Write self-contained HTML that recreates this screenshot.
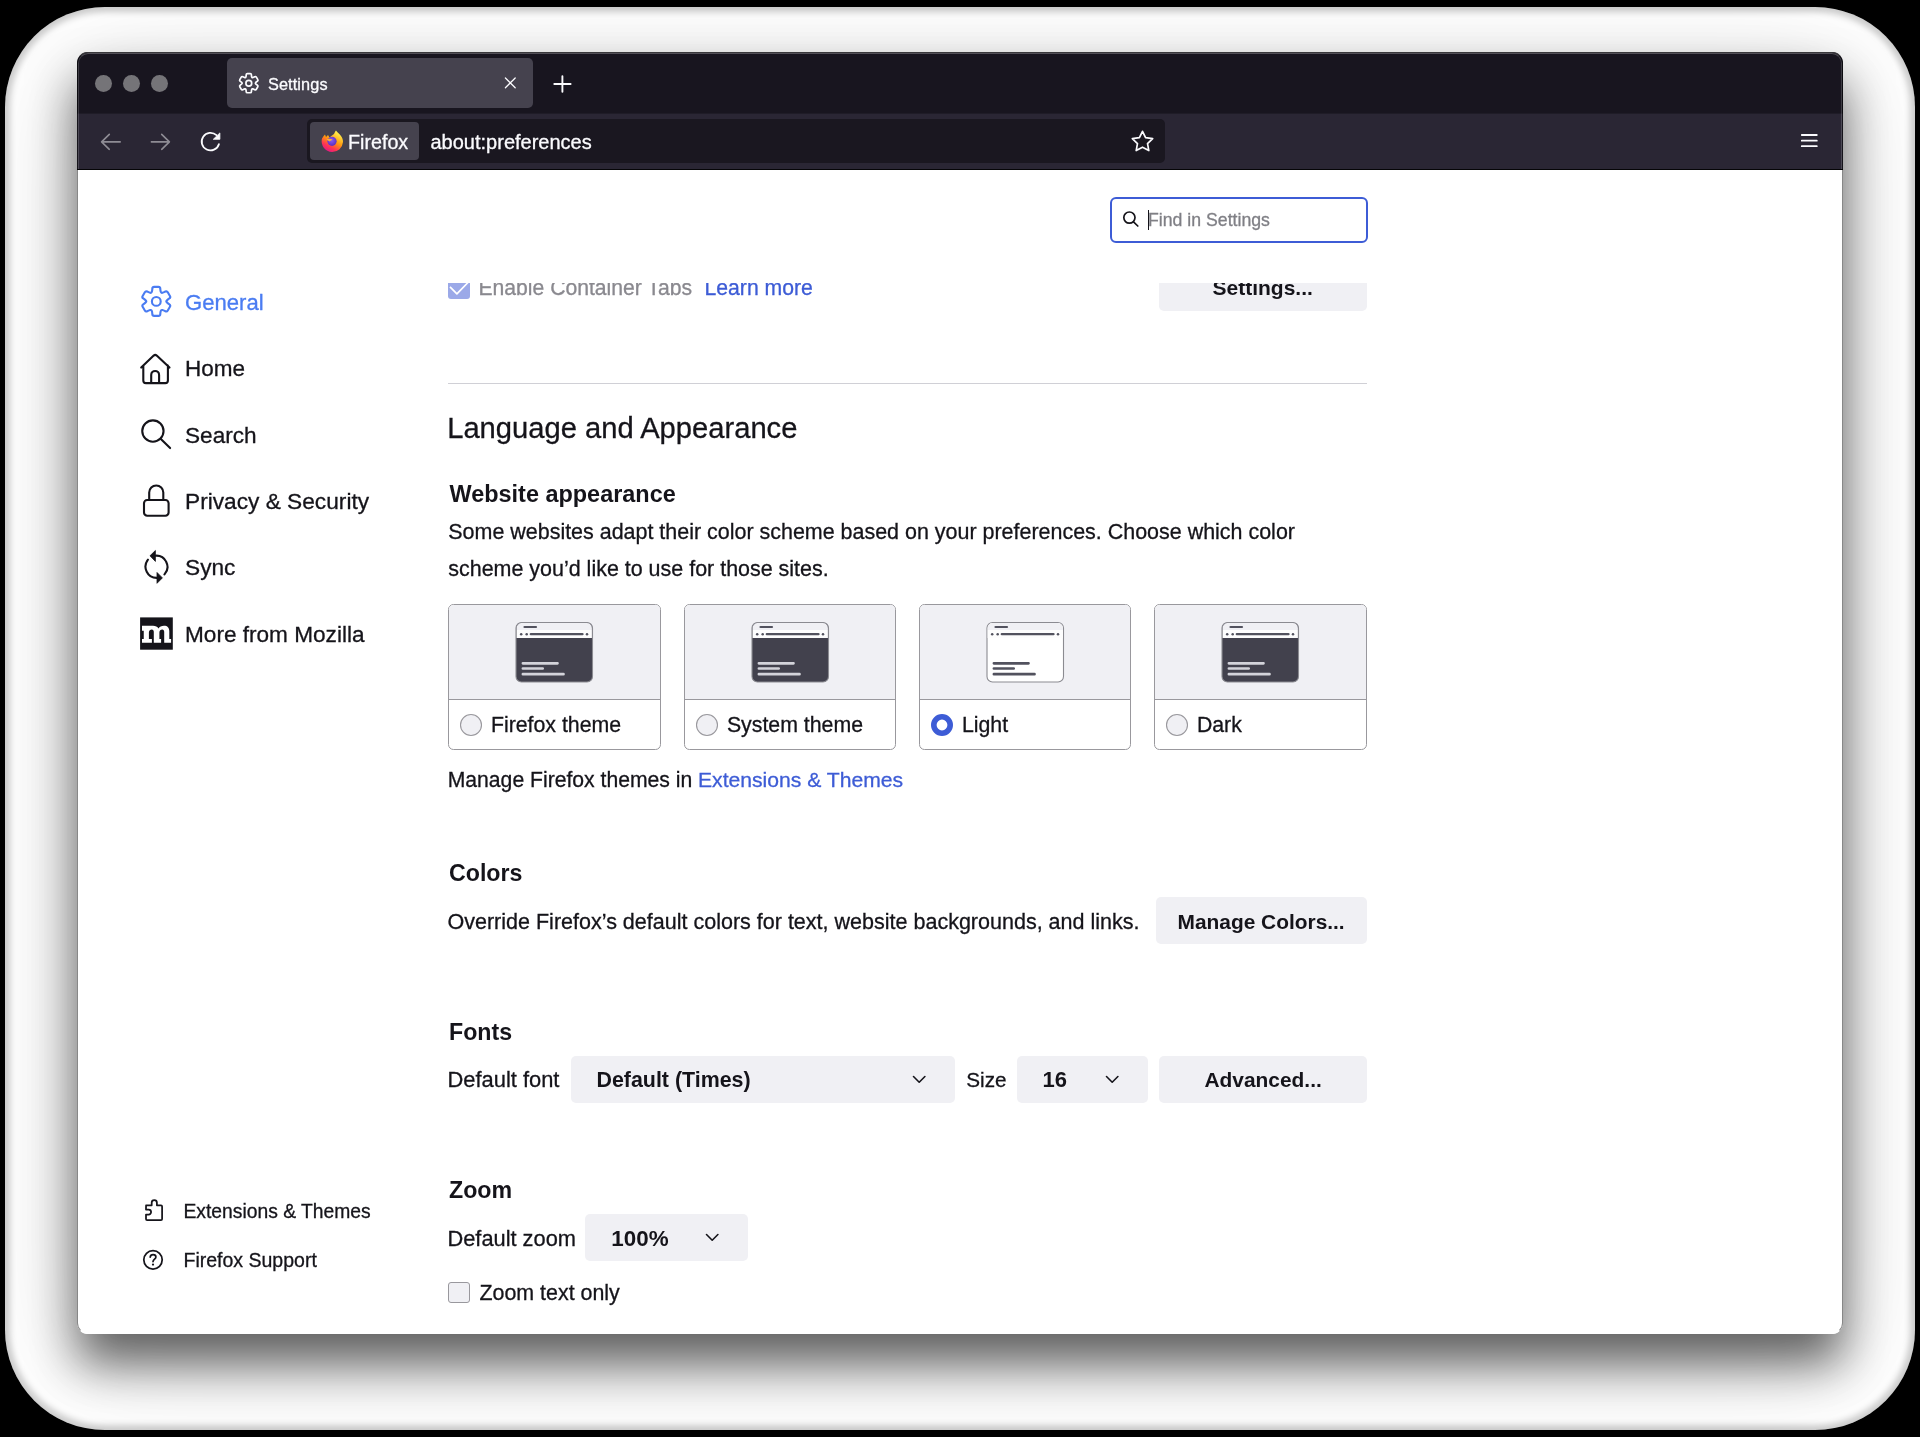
<!DOCTYPE html>
<html><head><meta charset="utf-8"><title>Settings</title>
<style>
html,body{margin:0;padding:0;width:1920px;height:1437px;overflow:hidden;background:#000;font-family:"Liberation Sans", sans-serif}
.t{position:absolute;white-space:nowrap;line-height:1}
#bg{position:absolute;left:5px;top:7px;width:1910px;height:1423px;border-radius:100px;background:#fff;overflow:hidden}
#ov{position:absolute;left:5px;top:7px;width:1910px;height:1423px;border-radius:100px;box-shadow:inset 0 0 6px 5px rgba(0,0,0,0.2)}
#sh{position:absolute;left:77px;top:52px;width:1766px;height:1282px;border-radius:11px;box-shadow:0 30px 48px rgba(0,0,0,0.576),0 22px 105px rgba(0,0,0,0.165)}
#win{position:absolute;left:77px;top:52px;width:1766px;height:1282px;border-radius:11px;overflow:hidden;background:#fff;will-change:transform}
#inner{position:absolute;left:-77px;top:-52px;width:1920px;height:1437px}
#hl{position:absolute;left:78px;top:53px;width:1764px;height:140px;border-radius:10px 10px 0 0;box-sizing:border-box;border:1px solid rgba(255,255,255,0.17);border-top-color:rgba(255,255,255,0.25);border-bottom:none;clip-path:inset(0 0 24px 0)}
#frame{position:absolute;left:77px;top:52px;width:1766px;height:1282px;border-radius:11px;box-sizing:border-box;border:1px solid rgba(0,0,0,0.47);border-top-color:#39383b;border-bottom-color:transparent}
</style></head><body>
<div id="bg"><div style="position:absolute;left:-5px;top:-7px;width:1920px;height:1437px"><div id="sh"></div></div></div>
<div id="win"><div id="inner">
<div style="position:absolute;left:77px;top:52px;width:1766px;height:61px;background:#18151f"></div>
<div style="position:absolute;left:77px;top:113px;width:1766px;height:1px;background:#1f1c27"></div>
<div style="position:absolute;left:77px;top:114px;width:1766px;height:55px;background:#2a2634"></div>
<div style="position:absolute;left:77px;top:169px;width:1766px;height:1px;background:#050507"></div>
<div style="position:absolute;left:95.2px;top:74.5px;width:17px;height:17px;border-radius:50%;background:#757478"></div>
<div style="position:absolute;left:123.0px;top:74.5px;width:17px;height:17px;border-radius:50%;background:#757478"></div>
<div style="position:absolute;left:150.7px;top:74.5px;width:17px;height:17px;border-radius:50%;background:#757478"></div>
<div style="position:absolute;left:227px;top:58px;width:306px;height:50px;border-radius:5px;background:#45424e"></div>
<svg style="position:absolute;left:238px;top:72px" width="22" height="22" viewBox="0 0 22 22"><path d="M8.15 3.40 L8.18 2.74 Q8.24 1.64 9.34 1.64 L12.26 1.64 Q13.36 1.64 13.42 2.74 L13.45 3.40 Q13.49 4.20 13.72 4.96 Q13.95 5.74 14.74 5.56 Q15.52 5.37 16.23 5.01 L16.82 4.70 Q17.80 4.20 18.35 5.15 L19.81 7.69 Q20.36 8.64 19.44 9.23 L18.88 9.59 Q18.21 10.03 17.66 10.61 Q17.10 11.20 17.66 11.79 Q18.21 12.37 18.88 12.81 L19.44 13.17 Q20.36 13.76 19.81 14.71 L18.35 17.25 Q17.80 18.20 16.82 17.70 L16.23 17.39 Q15.52 17.03 14.74 16.84 Q13.95 16.66 13.72 17.44 Q13.49 18.20 13.45 19.00 L13.42 19.66 Q13.36 20.76 12.26 20.76 L9.34 20.76 Q8.24 20.76 8.18 19.66 L8.15 19.00 Q8.11 18.20 7.88 17.44 Q7.65 16.66 6.86 16.84 Q6.08 17.03 5.37 17.39 L4.78 17.70 Q3.80 18.20 3.25 17.25 L1.79 14.71 Q1.24 13.76 2.16 13.17 L2.72 12.81 Q3.39 12.37 3.94 11.79 Q4.50 11.20 3.94 10.61 Q3.39 10.03 2.72 9.59 L2.16 9.23 Q1.24 8.64 1.79 7.69 L3.25 5.15 Q3.80 4.20 4.78 4.70 L5.37 5.01 Q6.08 5.37 6.86 5.56 Q7.65 5.74 7.88 4.96 Q8.11 4.20 8.15 3.40 Z" fill="none" stroke="#fbfbfe" stroke-width="1.7" stroke-linejoin="round"/><circle cx="10.8" cy="11.2" r="2.9" fill="none" stroke="#fbfbfe" stroke-width="1.7"/></svg>
<div class="t" style="left:268.00px;top:76px;font-size:16.3px;color:#fbfbfe;-webkit-text-stroke:0.3px currentColor;letter-spacing:0.1px;">Settings</div>
<svg style="position:absolute;left:504px;top:77px" width="13" height="13" viewBox="0 0 13 13"><path d="M1.4 1.0 L11.2 10.8 M11.2 1.0 L1.4 10.8" stroke="#fbfbfe" stroke-width="1.3" stroke-linecap="round"/></svg>
<svg style="position:absolute;left:553px;top:75px" width="19" height="19" viewBox="0 0 19 19"><path d="M9.4 1.3 V16.7 M1.3 9 H17.6" stroke="#fbfbfe" stroke-width="1.9" stroke-linecap="round"/></svg>
<svg style="position:absolute;left:95px;top:125px" width="130" height="35" viewBox="0 0 130 35"><path d="M14.3 9.4 L6.6 16.9 L14.3 24.3 M6.9 16.9 H25.2" fill="none" stroke="#8e8c94" stroke-width="1.6" stroke-linecap="round" stroke-linejoin="round"/><path d="M66.7 9.4 L74.4 16.9 L66.7 24.3 M74.1 16.9 H56.4" fill="none" stroke="#8e8c94" stroke-width="1.6" stroke-linecap="round" stroke-linejoin="round"/><path d="M123.9 19.2 A8.8 8.8 0 1 1 121.5 10.2" fill="none" stroke="#fbfbfe" stroke-width="1.8" stroke-linecap="round"/><path d="M118.3 14.3 L124.9 7.9 L124.9 14.3 Z" fill="#fbfbfe" stroke="#fbfbfe" stroke-width="0.8" stroke-linejoin="round"/></svg>
<div style="position:absolute;left:307px;top:119px;width:858px;height:44px;border-radius:5px;background:#1a1720"></div>
<div style="position:absolute;left:310px;top:122px;width:109px;height:38px;border-radius:4px;background:#45424e"></div>
<svg style="position:absolute;left:320px;top:129px" width="24" height="24" viewBox="0 0 24 24"><defs><linearGradient id="ffg" x1="0.8" y1="0.1" x2="0.3" y2="1"><stop offset="0" stop-color="#fff44f"/><stop offset="0.45" stop-color="#ff980e"/><stop offset="0.75" stop-color="#ff3750"/><stop offset="1" stop-color="#e31587"/></linearGradient><radialGradient id="ffp" cx="0.45" cy="0.4" r="0.6"><stop offset="0" stop-color="#8a5cf0"/><stop offset="1" stop-color="#5b2fc0"/></radialGradient></defs><path d="M12 23 A10.8 10.8 0 0 1 2 9.5 C3 8 4 6.5 5 5.5 L6 8 L8 6 L9.5 8.5 C11 7 13 6 14 5 C14.5 3.5 15.5 2 16 1.5 C17.5 3.5 19.5 5 21 7 C22.5 9 23 11 23 13 A10.8 10.8 0 0 1 12 23 Z" fill="url(#ffg)"/><circle cx="12" cy="12.3" r="4.6" fill="url(#ffp)"/><path d="M6.5 10.5 C8 9.5 10 9.5 12.5 10.5 L9.5 12.5 Z" fill="#f5b041"/></svg>
<div class="t" style="left:348.00px;top:133px;font-size:19.7px;color:#fbfbfe;-webkit-text-stroke:0.3px currentColor;">Firefox</div>
<div class="t" style="left:430.50px;top:132px;font-size:20px;color:#fbfbfe;-webkit-text-stroke:0.3px currentColor;">about:preferences</div>
<svg style="position:absolute;left:1129px;top:128px" width="27" height="27" viewBox="0 0 27 27"><path d="M13.50 3.27 L16.60 9.69 L23.66 10.65 L18.53 15.58 L19.81 22.53 L13.50 19.21 L7.19 22.53 L8.47 15.58 L3.33 10.65 L10.40 9.69 Z" fill="none" stroke="#fbfbfe" stroke-width="1.7" stroke-linejoin="round"/></svg>
<svg style="position:absolute;left:1799px;top:132px" width="21" height="18" viewBox="0 0 21 18"><path d="M2.8 3 H17.8 M2.8 8.7 H17.8 M2.8 14.2 H17.8" stroke="#fbfbfe" stroke-width="1.8" stroke-linecap="round"/></svg>
<div style="position:absolute;left:1109.5px;top:196.5px;width:258px;height:46.5px;box-sizing:border-box;border:2.6px solid #3d5cd6;border-radius:6px;background:#fff"></div>
<svg style="position:absolute;left:1120px;top:208px" width="22" height="22" viewBox="0 0 22 22"><circle cx="9.4" cy="9.6" r="5.6" fill="none" stroke="#15141a" stroke-width="1.7"/><path d="M13.5 13.8 L17.8 18" stroke="#15141a" stroke-width="1.7" stroke-linecap="round"/></svg>
<div style="position:absolute;left:1147.5px;top:209.5px;width:1.6px;height:20px;background:#15141a"></div>
<div class="t" style="left:1148.00px;top:212px;font-size:17.7px;color:#7f7f85;-webkit-text-stroke:0.3px currentColor;">Find in Settings</div>
<div class="t" style="left:185.00px;top:292px;font-size:22.1px;color:#4a7cf2;-webkit-text-stroke:0.3px currentColor;">General</div>
<div class="t" style="left:185.00px;top:358px;font-size:22.5px;color:#15141a;-webkit-text-stroke:0.3px currentColor;">Home</div>
<div class="t" style="left:185.00px;top:425px;font-size:22.6px;color:#15141a;-webkit-text-stroke:0.3px currentColor;">Search</div>
<div class="t" style="left:185.00px;top:490px;font-size:22.7px;color:#15141a;-webkit-text-stroke:0.3px currentColor;">Privacy &amp; Security</div>
<div class="t" style="left:185.00px;top:556px;font-size:22.7px;color:#15141a;-webkit-text-stroke:0.3px currentColor;">Sync</div>
<div class="t" style="left:185.00px;top:624px;font-size:22.6px;color:#15141a;-webkit-text-stroke:0.3px currentColor;">More from Mozilla</div>
<svg style="position:absolute;left:140px;top:285px" width="33" height="33" viewBox="0 0 33 33"><path d="M12.26 4.47 L12.31 3.61 Q12.42 1.91 14.12 1.91 L18.48 1.91 Q20.18 1.91 20.29 3.61 L20.34 4.47 Q20.42 5.66 20.75 6.82 Q21.10 8.09 22.37 7.76 Q23.54 7.46 24.61 6.93 L25.38 6.55 Q26.91 5.79 27.76 7.27 L29.94 11.05 Q30.79 12.52 29.37 13.46 L28.66 13.94 Q27.66 14.60 26.82 15.46 Q25.90 16.40 26.82 17.34 Q27.66 18.20 28.66 18.86 L29.37 19.34 Q30.79 20.28 29.94 21.75 L27.76 25.53 Q26.91 27.01 25.38 26.25 L24.61 25.87 Q23.54 25.34 22.37 25.04 Q21.10 24.71 20.75 25.98 Q20.42 27.14 20.34 28.33 L20.29 29.19 Q20.18 30.89 18.48 30.89 L14.12 30.89 Q12.42 30.89 12.31 29.19 L12.26 28.33 Q12.18 27.14 11.85 25.98 Q11.50 24.71 10.23 25.04 Q9.06 25.34 7.99 25.87 L7.22 26.25 Q5.69 27.01 4.84 25.53 L2.66 21.75 Q1.81 20.28 3.23 19.34 L3.94 18.86 Q4.94 18.20 5.78 17.34 Q6.70 16.40 5.78 15.46 Q4.94 14.60 3.94 13.94 L3.23 13.46 Q1.81 12.52 2.66 11.05 L4.84 7.27 Q5.69 5.79 7.22 6.55 L7.99 6.93 Q9.06 7.46 10.23 7.76 Q11.50 8.09 11.85 6.82 Q12.18 5.66 12.26 4.47 Z" fill="none" stroke="#4a7cf2" stroke-width="2.1" stroke-linejoin="round"/><circle cx="16.3" cy="16.4" r="4.4" fill="none" stroke="#4a7cf2" stroke-width="2.1"/></svg>
<svg style="position:absolute;left:136px;top:348px" width="40" height="42" viewBox="0 0 40 42"><path d="M5.2 19.6 L17.7 7.6 Q19.2 6.3 20.7 7.6 L33.5 19.6 M7.3 17.5 V32.5 Q7.3 35.1 9.9 35.1 H29.3 Q31.9 35.1 31.9 32.5 V17.5 M15.2 35.1 V26.9 A3.9 3.9 0 0 1 23.1 26.9 V35.1" fill="none" stroke="#15141a" stroke-width="2.1" stroke-linejoin="round" stroke-linecap="round"/></svg>
<svg style="position:absolute;left:136px;top:414px" width="40" height="42" viewBox="0 0 40 42"><circle cx="16.9" cy="17.05" r="10.65" fill="none" stroke="#15141a" stroke-width="2.1"/><path d="M24.6 24.8 L34.1 34.1" stroke="#15141a" stroke-width="2.1" stroke-linecap="round"/></svg>
<svg style="position:absolute;left:136px;top:480px" width="40" height="42" viewBox="0 0 40 42"><rect x="8" y="20" width="24.6" height="15.7" rx="3.2" fill="none" stroke="#15141a" stroke-width="2.1"/><path d="M13.2 20 V12.5 A7.05 7.05 0 0 1 27.3 12.5 V20" fill="none" stroke="#15141a" stroke-width="2.1"/></svg>
<svg style="position:absolute;left:136px;top:546px" width="40" height="42" viewBox="0 0 40 42"><path d="M19.3 9.7 A11.2 11.2 0 0 1 28.5 28.4" fill="none" stroke="#15141a" stroke-width="2.1" stroke-linecap="round"/><path d="M12 13.7 A11.2 11.2 0 0 0 21.1 31.9" fill="none" stroke="#15141a" stroke-width="2.1" stroke-linecap="round"/><path d="M14 9.8 L19.4 4.5 L19.4 15.4 Z" fill="#15141a" stroke="#15141a" stroke-width="0.8" stroke-linejoin="round"/><path d="M26.4 31.9 L21 26.5 L21 37.3 Z" fill="#15141a" stroke="#15141a" stroke-width="0.8" stroke-linejoin="round"/></svg>
<svg style="position:absolute;left:136px;top:612px" width="40" height="42" viewBox="0 0 40 42"><rect x="4.1" y="5.4" width="32.7" height="32.3" fill="#15141a"/><path d="M6 13.7 H17 C19.5 13.7 21.5 14.6 22.5 16.6 C23.5 14.6 25.5 13.7 28 13.7 C31.5 13.7 33.3 15.7 33.3 19.2 V26.9 H35.1 V30.8 H28.2 V20 C28.2 18.4 27.5 17.5 26.2 17.5 C24.7 17.5 23.4 18.7 23.4 20.4 V26.9 H25.1 V30.8 H17.8 V20 C17.8 18.4 17.1 17.5 15.8 17.5 C14.3 17.5 12.9 18.7 12.9 20.4 V26.9 H15.9 V30.8 H6 V26.9 H7.75 V18.7 H6 Z" fill="#fff"/></svg>
<div class="t" style="left:183.50px;top:1202px;font-size:19.3px;color:#15141a;-webkit-text-stroke:0.3px currentColor;">Extensions &amp; Themes</div>
<div class="t" style="left:183.50px;top:1251px;font-size:19.5px;color:#15141a;-webkit-text-stroke:0.3px currentColor;">Firefox Support</div>
<svg style="position:absolute;left:138px;top:1194px" width="32" height="32" viewBox="0 0 32 32"><path d="M8 11.3 H13.7 V8.7 A2.6 2.6 0 0 1 18.9 8.7 V11.3 H23 Q24.1 11.3 24.1 12.4 V24.9 Q24.1 26 23 26 H9.1 Q8 26 8 24.9 V20.6 H10.6 A2.5 2.5 0 0 0 10.6 15.6 H8 V12.4 Q8 11.3 9.1 11.3 Z" fill="none" stroke="#15141a" stroke-width="1.75" stroke-linejoin="round"/></svg>
<svg style="position:absolute;left:138px;top:1244px" width="32" height="32" viewBox="0 0 32 32"><circle cx="15" cy="15.85" r="9.2" fill="none" stroke="#15141a" stroke-width="1.75"/><path d="M12.2 13.1 C12.4 11.3 13.6 10.6 15.1 10.6 C16.7 10.6 17.9 11.6 17.9 13 C17.9 15 15.2 15.3 15 17.6" fill="none" stroke="#15141a" stroke-width="1.7" stroke-linecap="round"/><circle cx="15" cy="20.6" r="1.1" fill="#15141a"/></svg>
<div style="position:absolute;left:0;top:283px;width:1920px;height:1051px;overflow:hidden"><div style="position:absolute;left:0;top:-283px;width:1920px;height:1400px">
<div style="position:absolute;left:448px;top:277px;width:22px;height:22px;border-radius:3px;background:#9ba9e8"></div>
<svg style="position:absolute;left:448px;top:277px" width="22" height="22" viewBox="0 0 22 22"><path d="M2 9.9 L8.9 16.9 L20 5.5" fill="none" stroke="#fff" stroke-width="1.7" stroke-linejoin="round"/></svg>
<div class="t" style="left:478.50px;top:277px;font-size:21.15px;color:#8a898f;-webkit-text-stroke:0.3px currentColor;">Enable Container Tabs</div>
<div class="t" style="left:704.50px;top:277px;font-size:21.2px;color:#3d5cd6;-webkit-text-stroke:0.3px currentColor;">Learn more</div>
<div style="position:absolute;left:1159px;top:263px;width:208px;height:48px;border-radius:5px;background:#f0f0f4"></div>
<div class="t" style="left:1212.50px;top:277px;font-size:21.0px;color:#15141a;font-weight:700;">Settings...</div>
</div></div>
<div style="position:absolute;left:448px;top:383px;width:919px;height:1px;background:#d0d0d6"></div>
<div class="t" style="left:447.20px;top:414px;font-size:29.16px;color:#15141a;-webkit-text-stroke:0.3px currentColor;">Language and Appearance</div>
<div class="t" style="left:449.50px;top:483px;font-size:23.45px;color:#15141a;font-weight:700;">Website appearance</div>
<div class="t" style="left:448.30px;top:522px;font-size:21.46px;color:#15141a;-webkit-text-stroke:0.3px currentColor;">Some websites adapt their color scheme based on your preferences. Choose which color</div>
<div class="t" style="left:448.30px;top:559px;font-size:21.46px;color:#15141a;-webkit-text-stroke:0.3px currentColor;">scheme you’d like to use for those sites.</div>
<div style="position:absolute;left:448px;top:604px;width:213px;height:146px;box-sizing:border-box;border:1px solid #99989d;border-radius:5.5px;background:#fff;overflow:hidden"></div>
<div style="position:absolute;left:449px;top:605px;width:211px;height:95px;background:#f0f0f4;border-radius:4.5px 4.5px 0 0"></div>
<div style="position:absolute;left:449px;top:699px;width:211px;height:1px;background:#99989d"></div>
<svg style="position:absolute;left:513px;top:619px" width="82" height="66" viewBox="0 0 82 66"><rect x="3" y="3.5" width="76.5" height="59.5" rx="5.5" fill="#42414d" stroke="#8b8b91" stroke-width="1.1"/><path d="M3.6 11 V9 A5 5 0 0 1 8.6 4.1 H73.9 A5 5 0 0 1 78.9 9 V11 Z" fill="#f0f0f4"/><rect x="3.6" y="11" width="75.3" height="8" fill="#fdfdfd"/><path d="M11.5 8 H23" stroke="#52525e" stroke-width="2.2" stroke-linecap="round"/><path d="M17.8 15.2 H69.5" stroke="#52525e" stroke-width="2.3" stroke-linecap="round"/><circle cx="8.2" cy="15.2" r="1.25" fill="#52525e"/><circle cx="13.7" cy="15.2" r="1.25" fill="#52525e"/><circle cx="74" cy="15.2" r="1.25" fill="#52525e"/><path d="M9.9 44.3 H44.5 M9.9 49.5 H29.7 M9.9 55.2 H50.5" stroke="#d3d3da" stroke-width="2.7" stroke-linecap="round"/></svg>
<svg style="position:absolute;left:459.2px;top:713px" width="24" height="24" viewBox="0 0 24 24"><circle cx="12" cy="12" r="10.5" fill="#f0f0f4" stroke="#99989d" stroke-width="1.1"/></svg>
<div class="t" style="left:490.90px;top:715px;font-size:21.3px;color:#15141a;-webkit-text-stroke:0.3px currentColor;">Firefox theme</div>
<div style="position:absolute;left:684px;top:604px;width:212px;height:146px;box-sizing:border-box;border:1px solid #99989d;border-radius:5.5px;background:#fff;overflow:hidden"></div>
<div style="position:absolute;left:685px;top:605px;width:210px;height:95px;background:#f0f0f4;border-radius:4.5px 4.5px 0 0"></div>
<div style="position:absolute;left:685px;top:699px;width:210px;height:1px;background:#99989d"></div>
<svg style="position:absolute;left:749px;top:619px" width="82" height="66" viewBox="0 0 82 66"><rect x="3" y="3.5" width="76.5" height="59.5" rx="5.5" fill="#42414d" stroke="#8b8b91" stroke-width="1.1"/><path d="M3.6 11 V9 A5 5 0 0 1 8.6 4.1 H73.9 A5 5 0 0 1 78.9 9 V11 Z" fill="#f0f0f4"/><rect x="3.6" y="11" width="75.3" height="8" fill="#fdfdfd"/><path d="M11.5 8 H23" stroke="#52525e" stroke-width="2.2" stroke-linecap="round"/><path d="M17.8 15.2 H69.5" stroke="#52525e" stroke-width="2.3" stroke-linecap="round"/><circle cx="8.2" cy="15.2" r="1.25" fill="#52525e"/><circle cx="13.7" cy="15.2" r="1.25" fill="#52525e"/><circle cx="74" cy="15.2" r="1.25" fill="#52525e"/><path d="M9.9 44.3 H44.5 M9.9 49.5 H29.7 M9.9 55.2 H50.5" stroke="#d3d3da" stroke-width="2.7" stroke-linecap="round"/></svg>
<svg style="position:absolute;left:695.2px;top:713px" width="24" height="24" viewBox="0 0 24 24"><circle cx="12" cy="12" r="10.5" fill="#f0f0f4" stroke="#99989d" stroke-width="1.1"/></svg>
<div class="t" style="left:726.90px;top:715px;font-size:21.3px;color:#15141a;-webkit-text-stroke:0.3px currentColor;">System theme</div>
<div style="position:absolute;left:919px;top:604px;width:212px;height:146px;box-sizing:border-box;border:1px solid #99989d;border-radius:5.5px;background:#fff;overflow:hidden"></div>
<div style="position:absolute;left:920px;top:605px;width:210px;height:95px;background:#f0f0f4;border-radius:4.5px 4.5px 0 0"></div>
<div style="position:absolute;left:920px;top:699px;width:210px;height:1px;background:#99989d"></div>
<svg style="position:absolute;left:984px;top:619px" width="82" height="66" viewBox="0 0 82 66"><rect x="3" y="3.5" width="76.5" height="59.5" rx="5.5" fill="#ffffff" stroke="#8b8b91" stroke-width="1.1"/><path d="M3.6 11 V9 A5 5 0 0 1 8.6 4.1 H73.9 A5 5 0 0 1 78.9 9 V11 Z" fill="#f0f0f4"/><rect x="3.6" y="11" width="75.3" height="8" fill="#fdfdfd"/><path d="M11.5 8 H23" stroke="#52525e" stroke-width="2.2" stroke-linecap="round"/><path d="M17.8 15.2 H69.5" stroke="#52525e" stroke-width="2.3" stroke-linecap="round"/><circle cx="8.2" cy="15.2" r="1.25" fill="#52525e"/><circle cx="13.7" cy="15.2" r="1.25" fill="#52525e"/><circle cx="74" cy="15.2" r="1.25" fill="#52525e"/><path d="M9.9 44.3 H44.5 M9.9 49.5 H29.7 M9.9 55.2 H50.5" stroke="#52525e" stroke-width="2.7" stroke-linecap="round"/></svg>
<svg style="position:absolute;left:930.2px;top:713px" width="24" height="24" viewBox="0 0 24 24"><circle cx="12" cy="12" r="8.2" fill="#fff" stroke="#3d5cd6" stroke-width="5.6"/></svg>
<div class="t" style="left:961.90px;top:715px;font-size:21.3px;color:#15141a;-webkit-text-stroke:0.3px currentColor;">Light</div>
<div style="position:absolute;left:1154px;top:604px;width:213px;height:146px;box-sizing:border-box;border:1px solid #99989d;border-radius:5.5px;background:#fff;overflow:hidden"></div>
<div style="position:absolute;left:1155px;top:605px;width:211px;height:95px;background:#f0f0f4;border-radius:4.5px 4.5px 0 0"></div>
<div style="position:absolute;left:1155px;top:699px;width:211px;height:1px;background:#99989d"></div>
<svg style="position:absolute;left:1219px;top:619px" width="82" height="66" viewBox="0 0 82 66"><rect x="3" y="3.5" width="76.5" height="59.5" rx="5.5" fill="#42414d" stroke="#8b8b91" stroke-width="1.1"/><path d="M3.6 11 V9 A5 5 0 0 1 8.6 4.1 H73.9 A5 5 0 0 1 78.9 9 V11 Z" fill="#f0f0f4"/><rect x="3.6" y="11" width="75.3" height="8" fill="#fdfdfd"/><path d="M11.5 8 H23" stroke="#52525e" stroke-width="2.2" stroke-linecap="round"/><path d="M17.8 15.2 H69.5" stroke="#52525e" stroke-width="2.3" stroke-linecap="round"/><circle cx="8.2" cy="15.2" r="1.25" fill="#52525e"/><circle cx="13.7" cy="15.2" r="1.25" fill="#52525e"/><circle cx="74" cy="15.2" r="1.25" fill="#52525e"/><path d="M9.9 44.3 H44.5 M9.9 49.5 H29.7 M9.9 55.2 H50.5" stroke="#d3d3da" stroke-width="2.7" stroke-linecap="round"/></svg>
<svg style="position:absolute;left:1165.2px;top:713px" width="24" height="24" viewBox="0 0 24 24"><circle cx="12" cy="12" r="10.5" fill="#f0f0f4" stroke="#99989d" stroke-width="1.1"/></svg>
<div class="t" style="left:1196.90px;top:715px;font-size:21.3px;color:#15141a;-webkit-text-stroke:0.3px currentColor;">Dark</div>
<div class="t" style="left:447.70px;top:769px;font-size:21.16px;color:#15141a;-webkit-text-stroke:0.3px currentColor;">Manage Firefox themes in</div>
<div class="t" style="left:698.00px;top:769px;font-size:21.14px;color:#3d5cd6;-webkit-text-stroke:0.3px currentColor;">Extensions &amp; Themes</div>
<div class="t" style="left:449.00px;top:862px;font-size:23.2px;color:#15141a;font-weight:700;">Colors</div>
<div class="t" style="left:447.50px;top:912px;font-size:21.53px;color:#15141a;-webkit-text-stroke:0.3px currentColor;">Override Firefox’s default colors for text, website backgrounds, and links.</div>
<div style="position:absolute;left:1156px;top:897px;width:211px;height:47px;border-radius:5px;background:#f0f0f4"></div>
<div class="t" style="left:1177.50px;top:912px;font-size:20.9px;color:#15141a;font-weight:700;">Manage Colors...</div>
<div class="t" style="left:449.00px;top:1021px;font-size:23.2px;color:#15141a;font-weight:700;">Fonts</div>
<div class="t" style="left:447.50px;top:1069px;font-size:21.9px;color:#15141a;-webkit-text-stroke:0.3px currentColor;">Default font</div>
<div style="position:absolute;left:571px;top:1056px;width:384px;height:47px;border-radius:5px;background:#f0f0f4"></div>
<div class="t" style="left:596.50px;top:1070px;font-size:21.4px;color:#15141a;font-weight:700;">Default (Times)</div>
<svg style="position:absolute;left:912px;top:1075px" width="15" height="10" viewBox="0 0 15 10"><path d="M1.5 1.5 L7.2 7.2 L12.9 1.5" fill="none" stroke="#15141a" stroke-width="1.6" stroke-linecap="round" stroke-linejoin="round"/></svg>
<div class="t" style="left:966.30px;top:1070px;font-size:20.7px;color:#15141a;-webkit-text-stroke:0.3px currentColor;">Size</div>
<div style="position:absolute;left:1017px;top:1056px;width:131px;height:47px;border-radius:5px;background:#f0f0f4"></div>
<div class="t" style="left:1042.50px;top:1069px;font-size:22px;color:#15141a;font-weight:700;">16</div>
<svg style="position:absolute;left:1105px;top:1075px" width="15" height="10" viewBox="0 0 15 10"><path d="M1.5 1.5 L7.2 7.2 L12.9 1.5" fill="none" stroke="#15141a" stroke-width="1.6" stroke-linecap="round" stroke-linejoin="round"/></svg>
<div style="position:absolute;left:1159px;top:1056px;width:208px;height:47px;border-radius:5px;background:#f0f0f4"></div>
<div class="t" style="left:1204.50px;top:1070px;font-size:20.9px;color:#15141a;font-weight:700;">Advanced...</div>
<div class="t" style="left:449.00px;top:1179px;font-size:23.2px;color:#15141a;font-weight:700;">Zoom</div>
<div class="t" style="left:447.50px;top:1228px;font-size:21.8px;color:#15141a;-webkit-text-stroke:0.3px currentColor;">Default zoom</div>
<div style="position:absolute;left:585px;top:1214px;width:163px;height:47px;border-radius:5px;background:#f0f0f4"></div>
<div class="t" style="left:611.30px;top:1228px;font-size:22.4px;color:#15141a;font-weight:700;">100%</div>
<svg style="position:absolute;left:705px;top:1233px" width="15" height="10" viewBox="0 0 15 10"><path d="M1.5 1.5 L7.2 7.2 L12.9 1.5" fill="none" stroke="#15141a" stroke-width="1.6" stroke-linecap="round" stroke-linejoin="round"/></svg>
<div style="position:absolute;left:448px;top:1282px;width:22px;height:21px;box-sizing:border-box;border:1px solid #99989d;border-radius:3px;background:#f0f0f4"></div>
<div class="t" style="left:479.50px;top:1283px;font-size:21.4px;color:#15141a;-webkit-text-stroke:0.3px currentColor;">Zoom text only</div>
</div></div>
<div id="hl"></div>
<div id="frame"></div>
<div id="ov"></div>
</body></html>
